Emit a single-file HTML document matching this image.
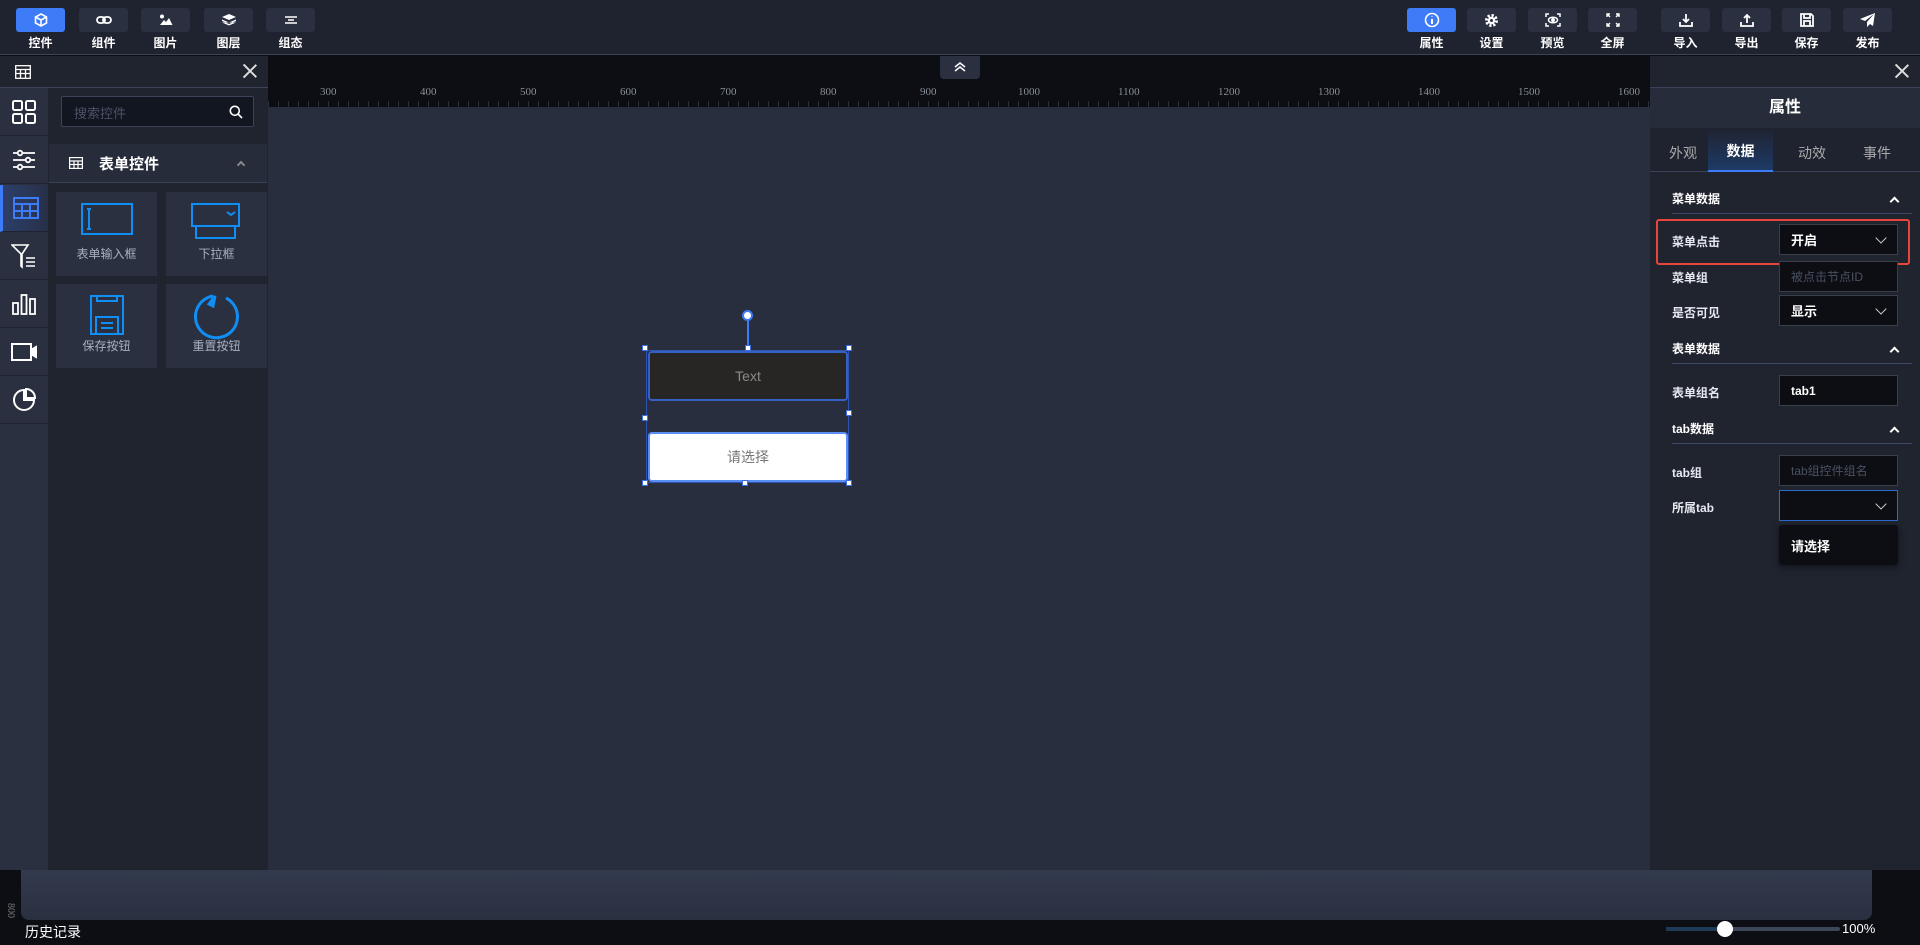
<!DOCTYPE html>
<html><head><meta charset="utf-8"><style>
*{box-sizing:border-box;margin:0;padding:0}
body{width:1920px;height:945px;overflow:hidden;background:#0c0e13;font-family:"Liberation Sans","Noto Sans CJK SC",sans-serif;color:#fff;position:relative;font-size:13px}
.abs{position:absolute}
.top{left:0;top:0;width:1920px;height:55px;background:#1f2330;border-bottom:1px solid #3a4358}
.tb{position:absolute;top:8px;width:49px;height:24px;background:#2a3040;border-radius:3px;display:flex;align-items:center;justify-content:center}
.tb.on{background:#3d7bf7}
.tl{position:absolute;top:34px;width:49px;text-align:center;font-size:12px;font-weight:bold;color:#fff}
.lp{left:0;top:56px;width:268px;height:814px;background:#20242f}
.ic{position:absolute;left:0;width:48px;height:47px;background:#2a3040;display:flex;align-items:center;justify-content:center;border-bottom:1px solid #1f2330}
.card{position:absolute;width:101px;height:84px;background:#2a3040}
.card span{position:absolute;left:0;right:0;bottom:14px;text-align:center;font-size:12px;color:#a8b0bf}
.rp{left:1650px;top:56px;width:270px;height:814px;background:#20242f}
.lbl{position:absolute;left:22px;font-size:12px;font-weight:bold;color:#e6e9ef}
.fld{position:absolute;left:129px;width:119px;height:31px;background:#0c0e13;border:1px solid #3a3f4a;font-size:13px;padding:0 11px;display:flex;align-items:center;font-weight:bold}
.sec{position:absolute;left:22px;width:240px;height:28px;border-bottom:1px solid #3a4a66;font-size:12px;font-weight:bold;padding-top:4px}
.chev{position:absolute;right:14px;top:12px;width:7px;height:7px;border-left:2px solid #fff;border-top:2px solid #fff;transform:rotate(45deg)}
.dd{position:absolute;right:12px;top:9px;width:8px;height:8px;border-right:1px solid #ccc;border-bottom:1px solid #ccc;transform:rotate(45deg)}
.h{position:absolute;width:6px;height:6px;background:#fff;border:1.5px solid #3d6fe0}
.x{position:absolute;right:11px;top:8px;width:14px;height:14px}
.x:before,.x:after{content:"";position:absolute;left:6px;top:-2px;width:1.5px;height:18px;background:#ddd;transform:rotate(45deg)}
.x:after{transform:rotate(-45deg)}
</style></head><body>
<div class="abs top">
 <div class="tb on" style="left:16px"><svg width="14" height="14" viewBox="0 0 14 14" fill="none" stroke="#fff" stroke-width="1.6"><path d="M7 1L12.5 4v6L7 13 1.5 10V4z M1.5 4L7 7l5.5-3 M7 7v6"/></svg></div><div class="tl" style="left:16px">控件</div>
 <div class="tb" style="left:79px"><svg width="16" height="10" viewBox="0 0 16 10" fill="none" stroke="#fff" stroke-width="1.8"><rect x="1" y="2" width="8" height="6" rx="3"/><rect x="7" y="2" width="8" height="6" rx="3"/></svg></div><div class="tl" style="left:79px">组件</div>
 <div class="tb" style="left:141px"><svg width="14" height="12" viewBox="0 0 14 12" fill="#fff"><circle cx="3" cy="2.5" r="2"/><path d="M1 11l4-5 2 2 3-4 3.5 7z"/></svg></div><div class="tl" style="left:141px">图片</div>
 <div class="tb" style="left:204px"><svg width="14" height="12" viewBox="0 0 14 12" fill="#fff"><path d="M7 0l7 3-7 3-7-3z M0 5.5l7 3 7-3v1.5l-7 3-7-3z M0 8.5l7 3 7-3"/></svg></div><div class="tl" style="left:204px">图层</div>
 <div class="tb" style="left:266px"><svg width="12" height="8" viewBox="0 0 12 8" stroke="#fff" stroke-width="1.5"><path d="M0 1h12M3 4h6M0 7h12"/></svg></div><div class="tl" style="left:266px">组态</div>
 <div class="tb on" style="left:1407px"><svg width="16" height="16" viewBox="0 0 16 16" fill="none" stroke="#fff" stroke-width="1.6"><circle cx="8" cy="8" r="6.5"/><path d="M8 7v5M8 4.5v.5" stroke-width="2"/></svg></div><div class="tl" style="left:1407px">属性</div>
 <div class="tb" style="left:1467px"><svg width="13" height="13" viewBox="0 0 14 14"><circle cx="7" cy="7" r="5" fill="none" stroke="#fff" stroke-width="4" stroke-dasharray="2.2 1.7"/><circle cx="7" cy="7" r="4" fill="#fff"/><circle cx="7" cy="7" r="1.6" fill="#2a3040"/></svg></div><div class="tl" style="left:1467px">设置</div>
 <div class="tb" style="left:1528px"><svg width="16" height="14" viewBox="0 0 16 14" fill="none" stroke="#fff" stroke-width="1.5"><path d="M1 4V1h3M12 1h3v3M15 10v3h-3M4 13H1v-3"/><ellipse cx="8" cy="7" rx="4.5" ry="2.8"/><circle cx="8" cy="7" r="1.2" fill="#fff"/></svg></div><div class="tl" style="left:1528px">预览</div>
 <div class="tb" style="left:1588px"><svg width="14" height="14" viewBox="0 0 14 14" fill="none" stroke="#fff" stroke-width="1.4"><path d="M1 4V1h3M1 1l3 3M13 4V1h-3M13 1l-3 3M1 10v3h3M1 13l3-3M13 10v3h-3M13 13l-3-3"/></svg></div><div class="tl" style="left:1588px">全屏</div>
 <div class="tb" style="left:1661px"><svg width="14" height="14" viewBox="0 0 14 14" fill="none" stroke="#fff" stroke-width="1.8"><path d="M7 1v8M4 6l3 3 3-3M1 9v4h12V9"/></svg></div><div class="tl" style="left:1661px">导入</div>
 <div class="tb" style="left:1722px"><svg width="14" height="14" viewBox="0 0 14 14" fill="none" stroke="#fff" stroke-width="1.8"><path d="M7 10V2M4 5l3-3 3 3M1 9v4h12V9"/></svg></div><div class="tl" style="left:1722px">导出</div>
 <div class="tb" style="left:1782px"><svg width="14" height="14" viewBox="0 0 14 14" fill="none" stroke="#fff" stroke-width="1.8"><path d="M1 1h10l2 2v10H1z M4 1v4h6V1 M4 13V8h6v5"/></svg></div><div class="tl" style="left:1782px">保存</div>
 <div class="tb" style="left:1843px"><svg width="16" height="14" viewBox="0 0 16 14" fill="#fff"><path d="M15 0L0 6l5 2 9-7-7 8v5l3-3 3 2z"/></svg></div><div class="tl" style="left:1843px">发布</div>
</div>

<div class="abs lp">
 <div class="abs" style="left:0;top:0;width:268px;height:32px;border-bottom:1px solid #3a4358">
  <svg class="abs" style="left:15px;top:9px" width="16" height="14" viewBox="0 0 16 14" fill="none" stroke="#fff" stroke-width="1.3"><rect x=".7" y=".7" width="14.6" height="12.6"/><path d="M1 4.5h14M1 8.5h14M5.5 4.5v9M10.5 4.5v9"/></svg>
  <div class="x"></div>
 </div>
 <div class="abs" style="left:0;top:32px;width:48px;height:782px;background:#2a3040"></div>
 <div class="ic" style="top:33px"><svg width="24" height="24" viewBox="0 0 24 24" fill="none" stroke="#fff" stroke-width="2"><rect x="1" y="1" width="9" height="9" rx="1.5"/><rect x="14" y="1" width="9" height="9" rx="1.5"/><rect x="1" y="14" width="9" height="9" rx="1.5"/><rect x="14" y="14" width="9" height="9" rx="1.5"/></svg></div>
 <div class="ic" style="top:81px"><svg width="22" height="22" viewBox="0 0 22 22" fill="none" stroke="#fff" stroke-width="1.8"><path d="M0 4h22M0 11h22M0 18h22"/><circle cx="7" cy="4" r="2.3" fill="#2a3040"/><circle cx="15" cy="11" r="2.3" fill="#2a3040"/><circle cx="7" cy="18" r="2.3" fill="#2a3040"/></svg></div>
 <div class="ic" style="top:129px;background:linear-gradient(90deg,#2c3f6a,#273048);border-left:3px solid #3d7bf7"><svg width="26" height="22" viewBox="0 0 26 22" fill="none" stroke="#3d7bf7" stroke-width="2"><rect x="1" y="1" width="24" height="20"/><path d="M1 7h24M1 14h24M9 7v14M17 7v14"/></svg></div>
 <div class="ic" style="top:177px"><svg width="26" height="26" viewBox="0 0 26 26" fill="none" stroke="#fff" stroke-width="1.6"><path d="M1 2h16l-6 9v13l-1-1V11z"/><path d="M15 15h9M15 19h9M15 23h9"/></svg></div>
 <div class="ic" style="top:225px"><svg width="24" height="22" viewBox="0 0 24 22" fill="none" stroke="#fff" stroke-width="1.8"><rect x="1" y="10" width="5" height="11"/><rect x="9.5" y="2" width="5" height="19"/><rect x="18" y="6" width="5" height="15"/></svg></div>
 <div class="ic" style="top:273px"><svg width="26" height="18" viewBox="0 0 26 18" fill="none" stroke="#fff" stroke-width="2"><rect x="1" y="1" width="19" height="16"/><path d="M20 7l5-3v10l-5-3" fill="#fff"/></svg></div>
 <div class="ic" style="top:321px"><svg width="24" height="24" viewBox="0 0 24 24" fill="none" stroke="#fff" stroke-width="2"><path d="M12 2a10 10 0 1 0 10 10H12z"/><path d="M14 1a9 9 0 0 1 9 9h-9z"/></svg></div>
 <div class="abs" style="left:61px;top:40px;width:193px;height:31px;background:#121620;border:1px solid #3a4358;border-radius:2px">
  <span class="abs" style="left:12px;top:6px;font-size:13px;color:#4a5266">搜索控件</span>
  <svg class="abs" style="right:10px;top:8px" width="14" height="14" viewBox="0 0 14 14" fill="none" stroke="#fff" stroke-width="1.6"><circle cx="5.8" cy="5.8" r="4.5"/><path d="M9 9l4 4"/></svg>
 </div>
 <div class="abs" style="left:49px;top:88px;width:218px;height:39px;background:#262c3a;border-bottom:1px solid #3a4358">
  <svg class="abs" style="left:20px;top:13px" width="14" height="12" viewBox="0 0 14 12" fill="none" stroke="#fff" stroke-width="1.2"><rect x=".6" y=".6" width="12.8" height="10.8"/><path d="M1 4h12M1 7.5h12M5 4v8M9 4v8"/></svg>
  <span class="abs" style="left:50px;top:9px;font-size:15px;font-weight:bold">表单控件</span>
  <div class="abs" style="right:23px;top:18px;width:6px;height:6px;border-left:2px solid #888;border-top:2px solid #888;transform:rotate(45deg)"></div>
 </div>
 <div class="card" style="left:56px;top:136px"><svg class="abs" style="left:25px;top:11px" width="52" height="32" viewBox="0 0 52 32" fill="none" stroke="#0f8ef5" stroke-width="2"><rect x="1" y="1" width="50" height="30"/><path d="M8 6v20M6 6h4M6 26h4"/></svg><span>表单输入框</span></div>
 <div class="card" style="left:166px;top:136px"><svg class="abs" style="left:25px;top:11px" width="50" height="36" viewBox="0 0 50 36" fill="none" stroke="#0f8ef5" stroke-width="2"><rect x="1" y="1" width="47" height="22"/><path d="M5 24v11h39V24M36 9l4 3 4-3"/></svg><span>下拉框</span></div>
 <div class="card" style="left:56px;top:228px"><svg class="abs" style="left:34px;top:11px" width="34" height="40" viewBox="0 0 34 40" fill="none" stroke="#0f8ef5" stroke-width="2"><rect x="1" y="1" width="32" height="38"/><path d="M7 1v5h20V1M6 39V22h22v17M11 28h12M11 33h12"/></svg><span>保存按钮</span></div>
 <div class="card" style="left:166px;top:228px"><svg class="abs" style="left:27px;top:8px" width="48" height="48" viewBox="0 0 48 48" fill="none" stroke="#0f8ef5" stroke-width="3"><path d="M33 6A21 21 0 1 1 20 4"/><path d="M16 12l6-8-2 10z" fill="#0f8ef5"/></svg><span>重置按钮</span></div>
</div>

<div class="abs" style="left:268px;top:56px;width:1382px;height:814px;background:#282e3e"></div>
<div class="abs" style="left:268px;top:56px;width:1382px;height:51px;background:#0c0e13;background-image:repeating-linear-gradient(90deg,#2a2e38 0 1px,transparent 1px 10px);background-size:100% 6px;background-repeat:no-repeat;background-position:0 45px"></div>
<div class="abs" style="left:268px;top:56px;width:1382px;height:51px;font-family:'Liberation Serif',serif;font-size:11px;color:#8a8f99">
 <span class="abs" style="left:52px;top:30px">300</span><span class="abs" style="left:152px;top:30px">400</span><span class="abs" style="left:252px;top:30px">500</span><span class="abs" style="left:352px;top:30px">600</span><span class="abs" style="left:452px;top:30px">700</span><span class="abs" style="left:552px;top:30px">800</span><span class="abs" style="left:652px;top:30px">900</span><span class="abs" style="left:750px;top:30px">1000</span><span class="abs" style="left:850px;top:30px">1100</span><span class="abs" style="left:950px;top:30px">1200</span><span class="abs" style="left:1050px;top:30px">1300</span><span class="abs" style="left:1150px;top:30px">1400</span><span class="abs" style="left:1250px;top:30px">1500</span><span class="abs" style="left:1350px;top:30px">1600</span>
</div>
<div class="abs" style="left:940px;top:56px;width:40px;height:23px;background:#2a3040;border-radius:0 0 4px 4px"><svg class="abs" style="left:13px;top:5px" width="14" height="12" viewBox="0 0 14 12" fill="none" stroke="#fff" stroke-width="1.5"><path d="M2 6l5-4 5 4M2 10l5-4 5 4"/></svg></div>

<div class="abs" style="left:747px;top:314px;width:2px;height:36px;background:#3d7bf7"></div>
<div class="abs" style="left:742px;top:310px;width:11px;height:11px;border-radius:50%;background:#fff;border:2px solid #3d7bf7"></div>
<div class="abs" style="left:646px;top:350px;width:203px;height:133px;border:1px solid #2d55b0"></div>
<div class="abs" style="left:648px;top:351px;width:200px;height:50px;background:#282624;border:2px solid #3560c4;border-radius:4px;display:flex;align-items:center;justify-content:center;color:#8a8a8a;font-size:14px">Text</div>
<div class="abs" style="left:648px;top:432px;width:200px;height:50px;background:#fff;border:2px solid #5b8ef5;border-radius:4px;display:flex;align-items:center;justify-content:center;color:#777;font-size:14px">请选择</div>
<div class="h" style="left:642px;top:345px"></div><div class="h" style="left:745px;top:345px"></div><div class="h" style="left:846px;top:345px"></div>
<div class="h" style="left:642px;top:415px"></div><div class="h" style="left:846px;top:410px"></div>
<div class="h" style="left:642px;top:480px"></div><div class="h" style="left:742px;top:480px"></div><div class="h" style="left:846px;top:480px"></div>

<div class="abs rp">
 <div class="abs" style="left:0;top:0;width:270px;height:32px;border-bottom:1px solid #3a4358"><div class="x"></div></div>
 <div class="abs" style="left:0;top:32px;width:270px;height:40px;background:#262c3a;text-align:center;font-size:16px;font-weight:bold;line-height:40px">属性</div>
 <div class="abs" style="left:0;top:72px;width:270px;height:44px;background:#1f2330;border-bottom:1px solid #3a4358;font-size:14px">
  <span class="abs" style="left:19px;top:15px;color:#aaa">外观</span>
  <div class="abs" style="left:58px;top:0;width:65px;height:44px;background:linear-gradient(#1f2330,#1e3a66);border-bottom:2px solid #3d7bf7;text-align:center;line-height:46px;font-weight:bold">数据</div>
  <span class="abs" style="left:148px;top:15px;color:#aaa">动效</span>
  <span class="abs" style="left:213px;top:15px;color:#aaa">事件</span>
 </div>
 <div class="sec" style="top:130px">菜单数据<div class="chev"></div></div>
 <div class="lbl" style="top:177px">菜单点击</div><div class="fld" style="top:168px">开启<div class="dd"></div></div>
 <div class="abs" style="left:6px;top:163px;width:254px;height:46px;border:2px solid #e8463c;border-radius:3px"></div>
 <div class="lbl" style="top:213px">菜单组</div><div class="fld" style="top:205px;color:#4a5060;font-weight:normal;font-size:12px">被点击节点ID</div>
 <div class="lbl" style="top:248px">是否可见</div><div class="fld" style="top:239px">显示<div class="dd"></div></div>
 <div class="sec" style="top:280px">表单数据<div class="chev"></div></div>
 <div class="lbl" style="top:328px">表单组名</div><div class="fld" style="top:319px;font-size:12px">tab1</div>
 <div class="sec" style="top:360px">tab数据<div class="chev"></div></div>
 <div class="lbl" style="top:408px">tab组</div><div class="fld" style="top:399px;color:#4a5060;font-weight:normal;font-size:12px">tab组控件组名</div>
 <div class="lbl" style="top:443px">所属tab</div><div class="fld" style="top:434px;border-color:#2a6bd0"><div class="dd"></div></div>
 <div class="abs" style="left:129px;top:469px;width:119px;height:40px;background:#0c0e13;border-radius:3px;font-size:13px;font-weight:bold;padding:11px 12px;box-shadow:0 2px 8px rgba(0,0,0,.5)">请选择</div>
</div>

<div class="abs" style="left:21px;top:870px;width:1851px;height:50px;background:linear-gradient(#323a4d,#2a3040);border-radius:0 0 8px 8px"></div>
<div class="abs" style="left:0;top:920px;width:1920px;height:25px;background:#0c0e13"></div>
<div class="abs" style="left:25px;top:922px;font-size:14px;color:#fff">历史记录</div>
<div class="abs" style="left:3px;top:905px;font-family:'Liberation Serif',serif;font-size:10px;color:#777;transform:rotate(90deg)">800</div>
<div class="abs" style="left:1666px;top:927px;width:174px;height:4px;background:#3e4659;border-radius:2px"><div style="width:58px;height:4px;background:#1e3a56"></div></div>
<div class="abs" style="left:1717px;top:921px;width:16px;height:16px;border-radius:50%;background:#fff"></div>
<div class="abs" style="left:1842px;top:921px;font-size:13px;color:#fff">100%</div>
</body></html>
